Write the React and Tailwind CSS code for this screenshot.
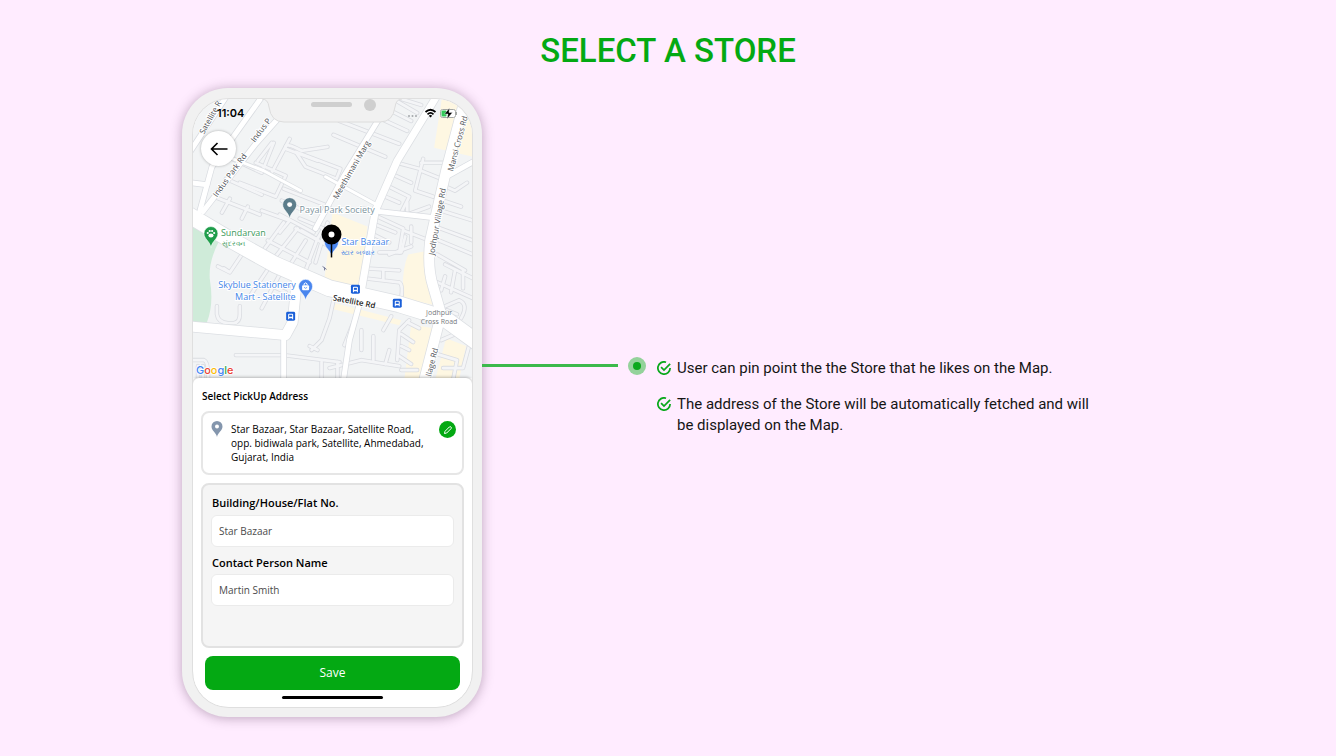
import React from "react";

const beige = [
    "M443 96H474V156L435 147Z",
    "M333 212L368 226L361 288L325 278Z",
    "M409 254L430 250L441 306L404 298Q402 270 409 254Z",
    "M336 303L402 320L400 325L334 309Z",
    "M412 324L434 328L424 380H405Z",
    "M447 338L467 346L460 380H436Z",
    "M425 96H440L436 100Z",
];

const lanes = [
    "M328 146L302 150Q284 140 286 148L318 160",
    "M296 151L341 168L337 178L306 166Z",
    "M232 158L262 172L274 142",
    "M256 162L286 175L276 196L240 182",
    "M262 194L226 178M272 172L290 138M258 160L272 142",
    "M214 196L260 214M222 212L230 198M242 218L248 206",
    "M284 188L330 206M282 200L300 208M262 210L290 220L280 232",
    "M300 218L324 228L318 238M296 228L330 246M268 240L310 262",
    "M262 252L284 222M276 256L298 228M292 262L306 240M280 214L314 232",
    "M218 266L230 272L242 254M230 272L224 268",
    "M262 308L280 274M250 296L270 266M268 284L286 292",
    "M217 306V314Q218 322 228 323H234Q240 322 240 314V306",
    "M236 355H284L340 362M284 355V380M322 362V380",
    "M193 360H204Q209 362 208 380M198 366V380M203 366V380",
    "M312 350L322 340L330 318L334 300M310 346L318 350",
    "M345 345L358 312M330 368L362 360L400 366M338 380V362",
    "M362 350V330M374 360V336M386 364L390 350M384 330L392 316",
    "M398 360L400 330L410 320M402 334L414 342M402 346L410 350M400 356L412 364",
    "M408 322L420 328M402 370H418",
    "M366 268L400 270M366 278L400 282Q404 284 402 298M384 270V280",
    "M312 98L348 102M340 120L400 143M334 134L386 156",
    "M382 118L408 130M388 108L412 120M394 98L418 112M402 98L422 104",
    "M398 162L420 168M394 174L412 182M390 186L410 196L402 212",
    "M386 196L400 202M424 158L416 190L434 196M422 162H444M422 170L442 178",
    "M408 202V214L430 206M378 216L404 228L400 252",
    "M376 224L396 232M374 234L390 242M380 252H402L406 236M390 254L412 246",
    "M404 230L430 240M412 242V226M386 100L380 112",
    "M447 186L456 190L468 182M438 198L462 206M442 210L474 220",
    "M436 226L474 240M440 240L474 254M438 254L466 270M446 264L474 278",
    "M442 290L446 276M452 292L456 270M464 288V270M438 282L474 298",
    "M446 306L460 300Q470 304 462 318M448 310L458 314",
    "M442 340L456 334L474 342M438 354L458 360L454 380M444 368H464L470 346",
    "M318 238L306 270M328 222L316 262M302 230L316 238",
];

const streets = [
    "M190 151L226 96",
    "M200 210L212 166L262 96",
    "M190 182L207 184",
    "M203 211L256 143L294 100",
    "M316 228L344 176L382 114",
    "M363 209L433 217",
    "M447 176L476 160",
    "M361 300L350 340L344 380",
    "M284 335V380",
];

const mainRoads = [
    { d: "M437 96L398 160L376 210L362 290", w: 7 },
    { d: "M188 214L225 236L275 264L330 288L400 304L445 318L478 342", w: 16 },
    { d: "M188 326L286 335L293 322L297 282", w: 10 },
    { d: "M467 94L447 170L431 240Q428 268 434 286L442 314L424 384", w: 10 },
    { d: "M228 156L264 170L301 190", w: 3 },
    { d: "M326 176L377 204", w: 3 },
];

const roadLabels = [
    { text: "Satellite R", x: 204, y: 134, turn: -61 },
    { text: "Indus Park Rd", x: 217, y: 197, turn: -54 },
    { text: "Indus P", x: 255, y: 142, turn: -53 },
    { text: "Meethimani Marg", x: 338, y: 199, turn: -60 },
    { text: "Mansi Cross Rd", x: 454, y: 171, turn: -75 },
    { text: "Jodhpur Village Rd", x: 435, y: 255, turn: -80 },
    { text: "llage Rd", x: 432, y: 377, turn: -76 },
];

function Pin({ x, y, color, children }) {
    return (
        <g transform={`translate(${x} ${y})`}>
            <path
                d="M0 13C-1.500 6-7 4.500-7-1A7 7 0 0 1 7-1C7 4.500 1.500 6 0 13Z"
                fill={color}
                stroke="#fff"
                strokeWidth="0.6"
            />
            {children}
        </g>
    );
}

function BusStop({ x, y }) {
    return (
        <g transform={`translate(${x} ${y})`}>
            <rect x="-4.500" y="-4.500" width="9" height="9" rx="1.500" fill="#1a5fd8" />
            <path d="M-2.500 3V-1.500Q-2.500-2.500-1.500-2.500H1.500Q2.500-2.500 2.500-1.500V3H1.500V2H-1.500V3Z" fill="#fff" />
            <rect x="-1.500" y="-1.500" width="3" height="2" fill="#1a5fd8" />
        </g>
    );
}

function StoreMap() {
    return (
        <svg
            viewBox="193 98 280 280"
            className="block w-full font-['Open_Sans','Noto_Sans',sans-serif]"
            role="img"
            aria-label="Map of stores near Satellite Rd"
        >
            <rect x="192" y="98" width="281" height="281" fill="#f2f4f5" />
            {beige.map((d) => (
                <path key={d} d={d} fill="#fef7e2" />
            ))}
            <path d="M190 226L206 232L219 241Q208 262 210 280Q214 304 207 322H190Z" fill="#cfebd9" />

            {/* side lanes, then streets, then the wide roads on top */}
            <g fill="none" strokeLinejoin="round" strokeLinecap="round">
                <g stroke="#dadce1" strokeWidth="4.400">
                    {lanes.map((d) => <path key={d} d={d} />)}
                </g>
                <g stroke="#f4f5f7" strokeWidth="2.800">
                    {lanes.map((d) => <path key={d} d={d} />)}
                </g>
                <g stroke="#d9dce1" strokeWidth="6.500">
                    {streets.map((d) => <path key={d} d={d} />)}
                </g>
                {mainRoads.map((r) => (
                    <path key={r.d} d={r.d} stroke="#dcdfe3" strokeWidth={r.w + 1.5} />
                ))}
                <g stroke="#fff" strokeWidth="5">
                    {streets.map((d) => <path key={d} d={d} />)}
                </g>
                {mainRoads.map((r) => (
                    <path key={r.d} d={r.d} stroke="#fff" strokeWidth={r.w} />
                ))}
            </g>

            <g fontSize="8" fontWeight="500" fill="#505358" stroke="#fff" strokeWidth="2" paintOrder="stroke">
                {roadLabels.map((l) => (
                    <text key={l.text + l.x} transform={`translate(${l.x} ${l.y}) rotate(${l.turn})`}>
                        {l.text}
                    </text>
                ))}
                <text transform="translate(333 300) rotate(11)" fill="#222" fontWeight="600">
                    Satellite Rd
                </text>
            </g>
            <g fontSize="7" fill="#777b80" textAnchor="middle">
                <text x="440" y="315">Jodhpur</text>
                <text x="440" y="324">Cross Road</text>
            </g>

            <g fontSize="9" stroke="#fff" strokeWidth="2" paintOrder="stroke">
                <text x="300" y="212" fill="#7c939d">Payal Park Society</text>
                <text x="221" y="235" fill="#3d9a5b">Sundarvan</text>
                <text x="342" y="245" fill="#4285e8">Star Bazaar</text>
                <g fill="#4285e8" textAnchor="end">
                    <text x="296" y="288">Skyblue Stationery</text>
                    <text x="296" y="300">Mart - Satellite</text>
                </g>
            </g>
            {/* Gujarati names under the two places */}
            <g fontSize="7">
                <text x="222" y="246" fill="#3d9a5b">સુંદરવન</text>
                <text x="342" y="255" fill="#4285e8">સ્ટાર બજાર</text>
            </g>

            <Pin x="290" y="205" color="#5c7d8b">
                <circle cy="-1" r="2.500" fill="#fff" />
            </Pin>
            <Pin x="211" y="234" color="#1f9d4b">
                <ellipse cy="1" rx="2.600" ry="2" fill="#fff" />
                <circle cx="-3.200" cy="-1.500" r="1.100" fill="#fff" />
                <circle cx="-1.200" cy="-3.500" r="1.100" fill="#fff" />
                <circle cx="1.200" cy="-3.500" r="1.100" fill="#fff" />
                <circle cx="3.200" cy="-1.500" r="1.100" fill="#fff" />
            </Pin>
            <Pin x="306" y="287" color="#4a86ee">
                <rect x="-3.500" y="-2" width="7" height="5" rx="1" fill="#fff" />
                <path d="M-1.500-2V-3.500Q0-5.500 1.500-3.500V-2" fill="none" stroke="#fff" />
                <path d="M-1.500 0Q0 2 1.500 0" fill="none" stroke="#4a86ee" strokeWidth="0.8" />
            </Pin>
            <Pin x="332" y="243" color="#4a86ee" />
            <path d="M323 266L327 269M325 267V270" stroke="#777b99" />
            <path d="M332 240V257" stroke="#000" strokeWidth="1.500" />
            <circle cx="332" cy="234" r="6.500" fill="#fff" stroke="#000" strokeWidth="7" />

            <BusStop x="356" y="289" />
            <BusStop x="398" y="303" />
            <BusStop x="291" y="316" />

            <text
                x="196"
                y="374"
                fontSize="11"
                fontWeight="500"
                stroke="#fff"
                strokeWidth="1.500"
                paintOrder="stroke"
                className="font-['Inter',sans-serif]"
            >
                <tspan fill="#4285f4">G</tspan>
                <tspan fill="#ea4335">o</tspan>
                <tspan fill="#fbbc05">o</tspan>
                <tspan fill="#4285f4">g</tspan>
                <tspan fill="#34a853">l</tspan>
                <tspan fill="#ea4335">e</tspan>
            </text>
        </svg>
    );
}

function StatusIcons() {
    return (
        <svg viewBox="0 0 52 12" className="w-[52px] h-3" aria-hidden="true">
            <g fill="#a5a8ab">
                <circle cx="4" cy="9" r="1" />
                <circle cx="7.500" cy="9" r="1" />
                <circle cx="11" cy="9" r="1" />
            </g>
            <g fill="none" stroke="#000" strokeWidth="1.700">
                <path d="M20.500 5Q25.500 0.500 30.500 5" />
                <path d="M22.500 7.300Q25.500 4.600 28.500 7.300" />
            </g>
            <path d="M23.800 8.800Q25.500 7.200 27.200 8.800L25.500 10.600Z" />
            <rect x="35.500" y="2.500" width="15" height="8" rx="2" fill="#fff" stroke="#a5a8a5" />
            <rect x="36.500" y="3.500" width="5" height="6" rx="1" fill="#35c759" />
            <path d="M44.500 1L39.500 7H43L42 12L47.500 5.500H44Z" fill="#000" stroke="#fff" strokeWidth="0.400" />
            <path d="M51.500 5V8" stroke="#a5a8a5" />
        </svg>
    );
}

function AddressForm() {
    return (
        <form className="relative flex-1 flex flex-col rounded-t-md bg-white px-2 pt-2 text-black shadow-[0_-1px_3px_rgba(0,0,0,0.25)]">
            <h2 className="px-px pt-0.5 text-[10px] leading-4 font-semibold">Select PickUp Address</h2>

            <div className="mt-[7px] flex items-start gap-2 h-16 rounded-lg border-2 border-[#e6e6e6] px-2 pt-2">
                <svg viewBox="0 0 12 16" className="w-3 h-4 shrink-0" aria-hidden="true">
                    <path d="M6 16C5 11 0.500 10 0.500 5.500A5.500 5.500 0 0 1 11.500 5.500C11.500 10 7 11 6 16Z" fill="#8496ad" />
                    <circle cx="6" cy="5.500" r="2" fill="#fff" />
                </svg>
                <p className="flex-1 pt-px text-[10px] leading-[14px] font-medium">
                    Star Bazaar, Star Bazaar, Satellite Road, opp. bidiwala park, Satellite, Ahmedabad, Gujarat, India
                </p>
                <button
                    type="button"
                    aria-label="Edit address"
                    className="size-[17px] -mr-0.5 shrink-0 flex items-center justify-center rounded-full bg-[#04a913]"
                >
                    <svg viewBox="0 0 10 10" className="size-2.5" fill="none" stroke="#fff" aria-hidden="true">
                        <path d="M1.500 8.500L2 6.300L6.300 2Q7.200 1.200 8 2Q8.800 2.800 8 3.700L3.700 8Z" />
                    </svg>
                </button>
            </div>

            <div className="mt-2 h-[165px] rounded-lg border-2 border-[#e2e2e2] bg-[#f5f5f5] px-2 pt-2.5">
                <label htmlFor="building" className="block px-px text-[11px] leading-4 font-semibold">
                    Building/House/Flat No.
                </label>
                <input
                    id="building"
                    type="text"
                    defaultValue="Star Bazaar"
                    className="mt-1 block w-full h-8 rounded-md border border-[#ebebeb] bg-white px-[7px] text-[10px] text-[#4b4b4b] focus:outline-none"
                />
                <label htmlFor="contact" className="mt-2 block px-px text-[11px] leading-4 font-semibold">
                    Contact Person Name
                </label>
                <input
                    id="contact"
                    type="text"
                    defaultValue="Martin Smith"
                    className="mt-[3px] block w-full h-8 rounded-md border border-[#ebebeb] bg-white px-[7px] text-[10px] text-[#4b4b4b] focus:outline-none"
                />
            </div>

            <button type="submit" className="mt-2 mx-1 h-[34px] rounded-lg bg-[#04a913] text-xs text-white">
                Save
            </button>
            <div className="mx-auto mt-1.5 h-[3px] w-[101px] rounded-full bg-black"></div>
        </form>
    );
}

function Phone() {
    return (
        <div className="w-[300px] shrink-0 rounded-[46px] bg-[#f1f1f1] p-[10px] pt-[11px] pl-[11px] shadow-[0_1px_12px_rgba(60,30,60,0.35)] font-['Open_Sans','Noto_Sans',sans-serif]">
            <div className="relative flex flex-col min-h-[608px] overflow-hidden rounded-[36px] bg-white ring-1 ring-[#dfdfdf]">
                <StoreMap />
                <div className="absolute inset-x-0 top-0 flex items-start justify-between">
                    <span className="w-[69px] pl-6 pt-1.5 font-['Inter',sans-serif] text-[11px] leading-4 font-semibold text-black">
                        11:04
                    </span>
                    <svg viewBox="0 0 140 24" className="w-[140px] h-6" aria-hidden="true">
                        <path
                            d="M0 0Q6 0 7 8Q9 23 22 23H118Q131 23 133 8Q134 0 140 0Z"
                            fill="#f1f1f1"
                        />
                        <path
                            d="M0 0Q6 0 7 8Q9 23 22 23H118Q131 23 133 8Q134 0 140 0"
                            fill="none"
                            stroke="#dcdcdc"
                        />
                        <rect x="49" y="3" width="41" height="5" rx="2.500" fill="#cfcfcf" />
                        <circle cx="108" cy="6" r="6" fill="#cfcfcf" />
                    </svg>
                    <span className="w-[70px] pl-[3px] pt-2">
                        <StatusIcons />
                    </span>
                </div>
                <button
                    type="button"
                    aria-label="Back"
                    className="absolute left-2 top-8 size-[35px] flex items-center justify-center rounded-full bg-white shadow-[0_0_3px_rgba(0,0,0,0.3)]"
                >
                    <svg viewBox="0 0 18 14" className="w-[18px] h-3.5" fill="none" stroke="#000" strokeWidth="1.600" aria-hidden="true">
                        <path d="M7.500 1L1.500 7L7.500 13M1.500 7H17.500" />
                    </svg>
                </button>
                <AddressForm />
            </div>
        </div>
    );
}

function CheckItem({ children }) {
    return (
        <li className="flex gap-1.5">
            <svg
                viewBox="0 0 24 24"
                className="mt-[3px] size-3.5 shrink-0"
                fill="none"
                stroke="#0aa81c"
                strokeWidth="3"
                aria-hidden="true"
            >
                <path d="M22.500 12A10.500 10.500 0 1 1 15.500 2.100" />
                <path d="M7 10.500L12 15.500L22.500 5" />
            </svg>
            <span>{children}</span>
        </li>
    );
}

export default function App() {
    return (
        <section className="min-h-screen w-full bg-[#ffecff] pt-[27px] pb-9 font-['Roboto',sans-serif]">
            <h1 className="text-center text-[33px] leading-12 font-medium text-[#04a913]">SELECT A STORE</h1>
            <div className="mx-auto mt-[13px] flex max-w-[972px] items-start">
                <Phone />
                <div className="mt-[269px] flex flex-1 items-start">
                    <div className="mt-[7px] h-[3px] w-[136px] shrink-0 bg-[#3cb94c]"></div>
                    <span className="ml-2.5 size-[18px] shrink-0 flex items-center justify-center rounded-full bg-[#94d29b]">
                        <span className="size-2 rounded-full bg-[#0aa81c]"></span>
                    </span>
                    <ul className="ml-[11px] mt-px flex max-w-[450px] flex-col gap-[15px] text-[15px] leading-[21px] text-[#151515]">
                        <CheckItem>User can pin point the the Store that he likes on the Map.</CheckItem>
                        <CheckItem>The address of the Store will be automatically fetched and will be displayed on the Map.</CheckItem>
                    </ul>
                </div>
            </div>
        </section>
    );
}
